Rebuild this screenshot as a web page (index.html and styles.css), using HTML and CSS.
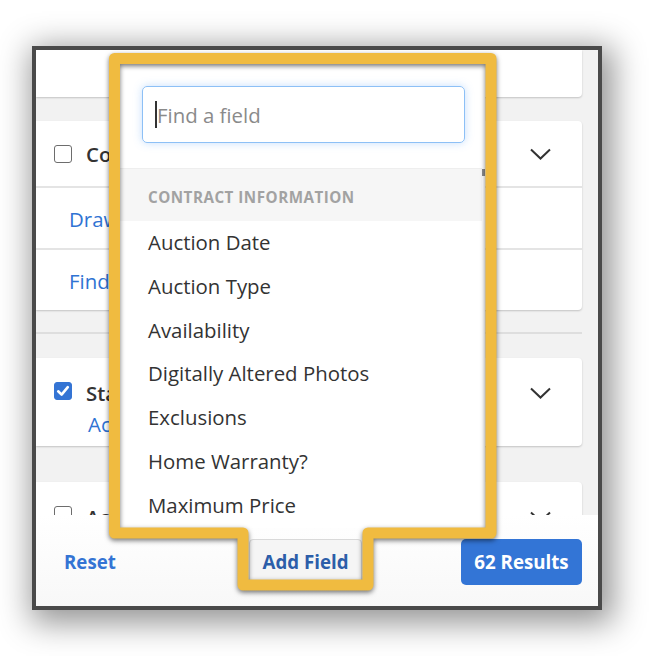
FILE: index.html
```html
<!DOCTYPE html>
<html lang="en">
<head>
<meta charset="utf-8">
<title>Filters – Add Field</title>
<link rel="stylesheet" href="styles.css">
</head>
<body>
<div class="stage">
  <div class="frame">
    <div class="scroll">
      <div class="card card-top"></div>

      <div class="card card-gap">
        <div class="card-head">
          <span class="checkbox"></span>
          <span class="title">Commute Time</span>
          <svg class="chev" width="21" height="12" viewBox="0 0 21 12"><polyline points="1,1.5 10.5,10.5 20,1.5"/></svg>
        </div>
        <div class="row"><a class="link">Draw a Shape</a></div>
        <div class="row"><a class="link">Find a Location</a></div>
      </div>

      <div class="group-sep"></div>

      <div class="card">
        <div class="card-head tall">
          <span class="checkbox checked"><svg width="18" height="18" viewBox="0 0 18 18"><polyline points="4.2,9.3 7.6,12.6 13.8,5.2"/></svg></span>
          <div class="title-col">
            <span class="title">Status</span>
            <a class="link sub">Active</a>
          </div>
          <svg class="chev" width="21" height="12" viewBox="0 0 21 12"><polyline points="1,1.5 10.5,10.5 20,1.5"/></svg>
        </div>
      </div>

      <div class="card card-gap2">
        <div class="card-head tall">
          <span class="checkbox"></span>
          <div class="title-col">
            <span class="title">Acres</span>
          </div>
          <svg class="chev" width="21" height="12" viewBox="0 0 21 12"><polyline points="1,1.5 10.5,10.5 20,1.5"/></svg>
        </div>
      </div>
    </div>

    <div class="footer">
      <a class="reset">Reset</a>
      <button class="btn btn-add">Add Field</button>
      <div class="results-cell"><button class="btn btn-results">62 Results</button></div>
    </div>

    <div class="popover">
      <div class="search"><span class="caret"></span><span class="placeholder">Find a field</span></div>
      <div class="section-head">Contract Information</div>
      <ul class="items">
        <li>Auction Date</li>
        <li>Auction Type</li>
        <li>Availability</li>
        <li>Digitally Altered Photos</li>
        <li>Exclusions</li>
        <li>Home Warranty?</li>
        <li>Maximum Price</li>
        <li>Minimum Price</li>
      </ul>
      <span class="thumb"></span>
    </div>
  </div>
</div>

<svg class="highlight" width="662" height="656" viewBox="0 0 662 656">
  <path d="M114.5 58.5 H491 V533 H368 V585 H243 V533 H114.5 Z"/>
</svg>
</body>
</html>
```

FILE: styles.css
```css
* { box-sizing: border-box; }
html, body { margin: 0; padding: 0; }
body {
  width: 662px;
  height: 656px;
  overflow: hidden;
  position: relative;
  background: #fff;
  font-family: "Open Sans", "Liberation Sans", sans-serif;
  color: #333;
}
.stage { padding: 46px 0 0 32px; }
.frame {
  width: 570px;
  height: 564px;
  border: 4px solid #4a4a4a;
  background: #f2f2f2;
  position: relative;
  display: flex;
  flex-direction: column;
  box-shadow: 5px 7px 30px 6px rgba(0, 0, 0, 0.42);
}
.scroll {
  flex: 1;
  min-height: 0;
  overflow: hidden;
  padding-right: 16px;
  display: flex;
  flex-direction: column;
}
.card {
  flex-shrink: 0;
  background: #fff;
  border-radius: 0 4px 4px 0;
  box-shadow: 0 1px 2px rgba(0, 0, 0, 0.2);
}
.card-top { height: 47px; border-radius: 0 0 4px 0; }
.card-gap { margin-top: 24px; }
.card-gap2 { margin-top: 36px; height: 88px; }
.card-head {
  height: 65px;
  display: flex;
  align-items: center;
  padding: 1px 31px 0 18px;
}
.card-head.tall {
  height: 88px;
  align-items: flex-start;
  padding-top: 23px;
}
.checkbox {
  flex-shrink: 0;
  width: 18px;
  height: 18px;
  border: 1.5px solid #6d6d6d;
  border-radius: 3px;
  margin-right: 14px;
  background: #fff;
}
.card-head.tall .checkbox { margin-top: 1px; }
.checkbox.checked {
  background: #3474d4;
  border-color: #3474d4;
  position: relative;
}
.checkbox.checked svg {
  position: absolute;
  left: -1.5px;
  top: -1.5px;
}
.checkbox.checked polyline {
  fill: none;
  stroke: #fff;
  stroke-width: 2.6;
  stroke-linecap: round;
  stroke-linejoin: round;
}
.title {
  flex: 1;
  font-size: 20.4px;
  font-weight: 600;
  line-height: 24px;
  color: #333;
}
.title-col {
  flex: 1;
  display: flex;
  flex-direction: column;
}
.chev { flex-shrink: 0; }
.card-head.tall .chev { margin-top: 6px; }
.chev polyline {
  fill: none;
  stroke: #333;
  stroke-width: 2;
}
.link {
  color: #2f73d3;
  font-size: 20.4px;
  line-height: 24px;
}
.link.sub { margin-top: 7px; padding-left: 2px; }
.row {
  height: 62px;
  border-top: 2px solid #e4e4e4;
  display: flex;
  align-items: center;
  padding: 1px 0 0 33px;
}
.group-sep {
  flex-shrink: 0;
  height: 2px;
  background: #dedede;
  margin: 22px 0 24px;
}

.footer {
  flex-shrink: 0;
  height: 91px;
  padding-top: 2px;
  background: linear-gradient(#fff, #f8f8f8);
  display: grid;
  grid-template-columns: 213px 113px 1fr;
  align-items: center;
}
.reset {
  padding-left: 28px;
  color: #3474d4;
  font-weight: 700;
  font-size: 18.7px;
}
.btn {
  font-family: inherit;
  font-weight: 700;
  font-size: 18.7px;
  height: 46px;
  border-radius: 4px;
  padding: 0;
}
.btn-add {
  width: 113px;
  background: #f5f5f5;
  border: 1px solid #d9d9d9;
  color: #2c5ea9;
}
.results-cell {
  display: flex;
  justify-content: flex-end;
  padding-right: 16px;
}
.btn-results {
  width: 121px;
  background: #3375d6;
  border: none;
  color: #fff;
  border-radius: 5px;
}

.popover {
  position: absolute;
  left: 84px;
  top: 14px;
  width: 365px;
  height: 464px;
  background: #fff;
  overflow: hidden;
}
.search {
  margin: 22px 20px 0 22px;
  height: 57px;
  border: 1px solid #8dc0f6;
  border-radius: 5px;
  box-shadow: 0 0 8px rgba(90, 160, 245, 0.35);
  display: flex;
  align-items: center;
  padding: 0 0 0 12px;
}
.caret {
  width: 2px;
  height: 27px;
  background: #333;
}
.placeholder {
  font-size: 20.4px;
  color: #8a8a8a;
}
.section-head {
  margin-top: 25px;
  width: 362px;
  height: 53px;
  border-top: 1px solid #eeeeee;
  background: #f6f6f6;
  padding: 3px 0 0 28px;
  display: flex;
  align-items: center;
  font-size: 15.2px;
  font-weight: 700;
  letter-spacing: 0.5px;
  text-transform: uppercase;
  color: #a2a2a2;
}
.items {
  list-style: none;
  margin: 0;
  padding: 0;
}
.items li {
  height: 43.8px;
  line-height: 43.8px;
  padding-left: 28px;
  font-size: 20.4px;
  color: #333;
}
.thumb {
  position: absolute;
  right: 0;
  top: 105px;
  width: 3px;
  height: 7px;
  background: #8a8a8a;
}

.highlight {
  position: absolute;
  left: 0;
  top: 0;
  pointer-events: none;
  filter: drop-shadow(0 2px 2.5px rgba(0, 0, 0, 0.55));
}
.highlight path {
  fill: none;
  stroke: #f0bb40;
  stroke-width: 11;
  stroke-linejoin: round;
}
```
